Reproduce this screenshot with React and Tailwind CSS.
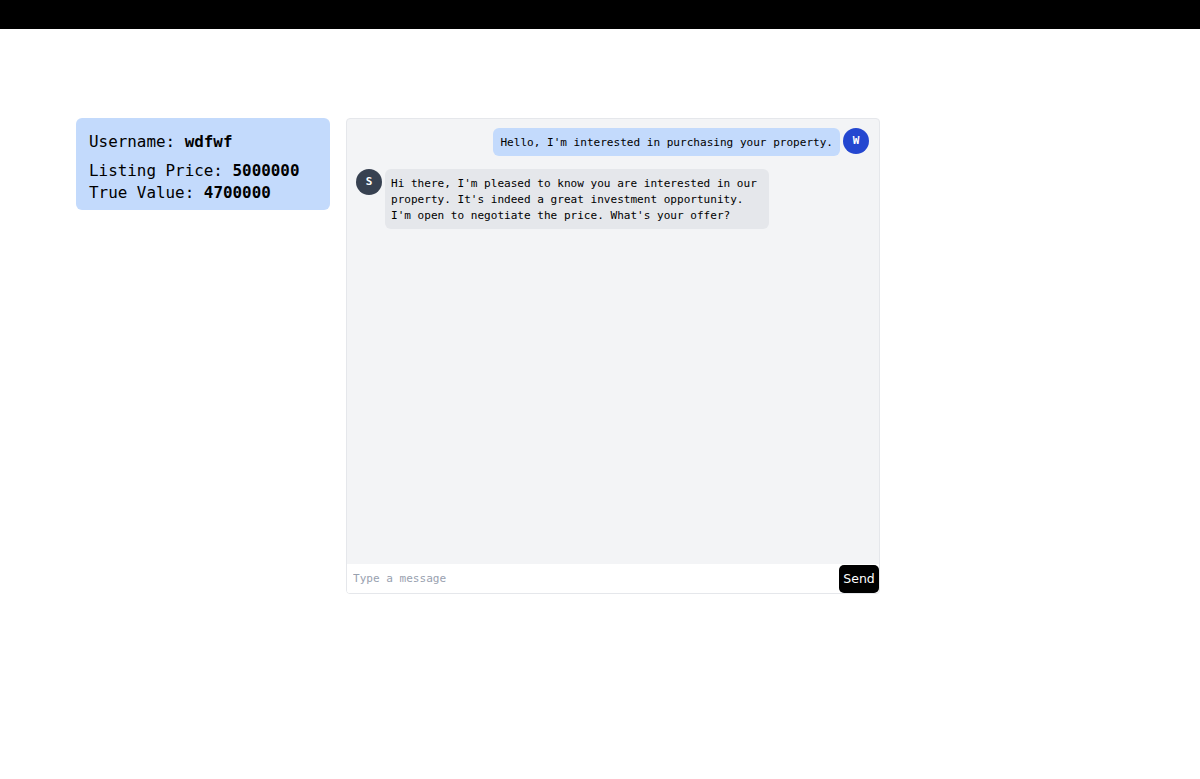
export default function App() {
  const mono = { fontFamily: '"DejaVu Sans Mono", "Liberation Mono", monospace' };
  return (
    <div className="min-h-[779px] bg-white" style={mono}>
      <div className="h-[29px] bg-black" />
      <div className="flex gap-4 pl-[76px] pt-[89px]">
        <div className="w-[254px] h-[92px] rounded-md bg-[#c3dafc] pl-[13px] pt-[13px] text-[15.9px] leading-[22px] text-black">
          <p className="mb-[7px]">Username: <span className="font-bold">wdfwf</span></p>
          <p>Listing Price: <span className="font-bold">5000000</span></p>
          <p>True Value: <span className="font-bold">4700000</span></p>
        </div>
        <div className="w-[534px] h-[476px] flex flex-col border border-gray-200 rounded-sm bg-[#f3f4f6] overflow-hidden">
          <div className="flex-1 flex flex-col gap-[13px] pt-[9px] pl-[9px] pr-[10px]">
            <div className="flex justify-end items-start gap-[3px]">
              <div className="rounded-md bg-[#c3dafc] px-[7px] pt-[7px] pb-[5px] text-[11.05px] leading-[16px] text-black">
                Hello, I'm interested in purchasing your property.
              </div>
              <div className="w-[26px] h-[26px] rounded-full bg-[#2447d0] text-white text-[11px] font-bold flex items-center justify-center">W</div>
            </div>
            <div className="flex items-start gap-[3px]">
              <div className="w-[26px] h-[26px] rounded-full bg-[#374151] text-white text-[11px] font-bold flex items-center justify-center">S</div>
              <div className="w-[384px] rounded-md bg-[#e5e7eb] px-[6px] pt-[7px] pb-[5px] text-[11.05px] leading-[16px] text-black">
                Hi there, I'm pleased to know you are interested in our<br />
                property. It's indeed a great investment opportunity.<br />
                I'm open to negotiate the price. What's your offer?
              </div>
            </div>
          </div>
          <div className="flex h-[29px] bg-white">
            <input
              className="flex-1 h-[29px] px-[6px] text-[11.05px] outline-none placeholder:text-gray-400 bg-white"
              style={mono}
              placeholder="Type a message"
            />
            <button
              className="w-[40px] h-[28px] mt-px rounded-[5px] bg-black text-white text-[12.5px] font-normal"
              style={{ fontFamily: '"DejaVu Sans", "Noto Sans", sans-serif' }}
            >
              Send
            </button>
          </div>
        </div>
      </div>
    </div>
  );
}
